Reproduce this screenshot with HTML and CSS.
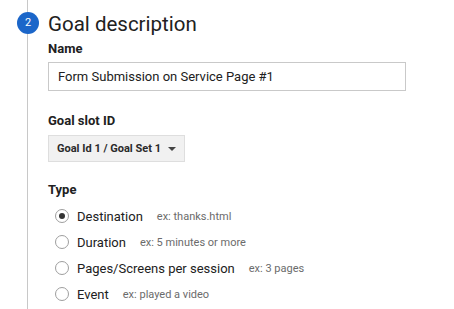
FILE: index.html
```html
<!DOCTYPE html>
<html>
<head>
<meta charset="utf-8">
<link rel="stylesheet" href="styles.css">
</head>
<body>
<div class="step">
  <div class="rail">
    <div class="num">2</div>
  </div>
  <div class="content">
    <h2 class="title">Goal description</h2>
    <div class="label">Name</div>
    <div class="input">Form Submission on Service Page #1</div>
    <div class="label slot">Goal slot ID</div>
    <div class="select">Goal Id 1 / Goal Set 1 <span class="caret"></span></div>
    <div class="label type">Type</div>
    <div class="radios">
      <div class="radio"><span class="dot checked"></span><span class="name">Destination</span><span class="ex">ex: thanks.html</span></div>
      <div class="radio"><span class="dot"></span><span class="name">Duration</span><span class="ex">ex: 5 minutes or more</span></div>
      <div class="radio"><span class="dot"></span><span class="name">Pages/Screens per session</span><span class="ex">ex: 3 pages</span></div>
      <div class="radio"><span class="dot"></span><span class="name">Event</span><span class="ex">ex: played a video</span></div>
    </div>
  </div>
</div>
</body>
</html>
```
FILE: styles.css
```css
html, body { margin: 0; padding: 0; background: #fff; }
body { font-family: Roboto, "Noto Sans", sans-serif; color: #212121; width: 454px; height: 309px; overflow: hidden; }
.step { position: relative; display: flex; height: 309px; }
.rail { position: relative; width: 48px; flex: none; }
.rail::before { content: ""; position: absolute; left: 27px; top: 0; bottom: 0; width: 1px; background: #c8c8c8; }
.num { position: absolute; left: 17px; top: 12px; width: 22px; height: 22px; border-radius: 50%; background: #1b66c9; color: #fff; font-size: 11px; line-height: 22px; text-align: center; }
.content { padding-top: 11px; }
.title { margin: 0; font-size: 20.5px; font-weight: 400; line-height: 26px; color: #212121; }
.label { font-size: 13px; font-weight: 700; color: #212121; line-height: 16px; margin-top: 4px; }
.input { margin-top: 5px; width: 347px; height: 27px; border: 1px solid #c9c9c9; font-size: 13px; line-height: 27px; padding-left: 9px; color: #212121; }
.label.slot { margin-top: 22px; }
.select { margin-top: 6px; display: inline-flex; align-items: center; height: 25px; padding: 0 8px 0 8px; border: 1px solid #dedede; background: #f1f1f1; font-size: 11px; font-weight: 700; color: #2a2a2a; }
.caret { width: 0; height: 0; border-left: 4px solid transparent; border-right: 4px solid transparent; border-top: 4px solid #444; margin-left: 7px; }
.label.type { margin-top: 20px; }
.radios { margin-top: 5px; padding-left: 7px; }
.radio { display: flex; align-items: center; height: 26px; }
.dot { width: 12px; height: 12px; border: 1px solid #9e9e9e; border-radius: 50%; position: relative; flex: none; margin-right: 8px; }
.dot.checked::after { content: ""; position: absolute; left: 3px; top: 3px; width: 6px; height: 6px; border-radius: 50%; background: #333; }
.name { font-size: 13px; color: #212121; }
.ex { font-size: 11px; color: #6b6b6b; margin-left: 14px; }
```
